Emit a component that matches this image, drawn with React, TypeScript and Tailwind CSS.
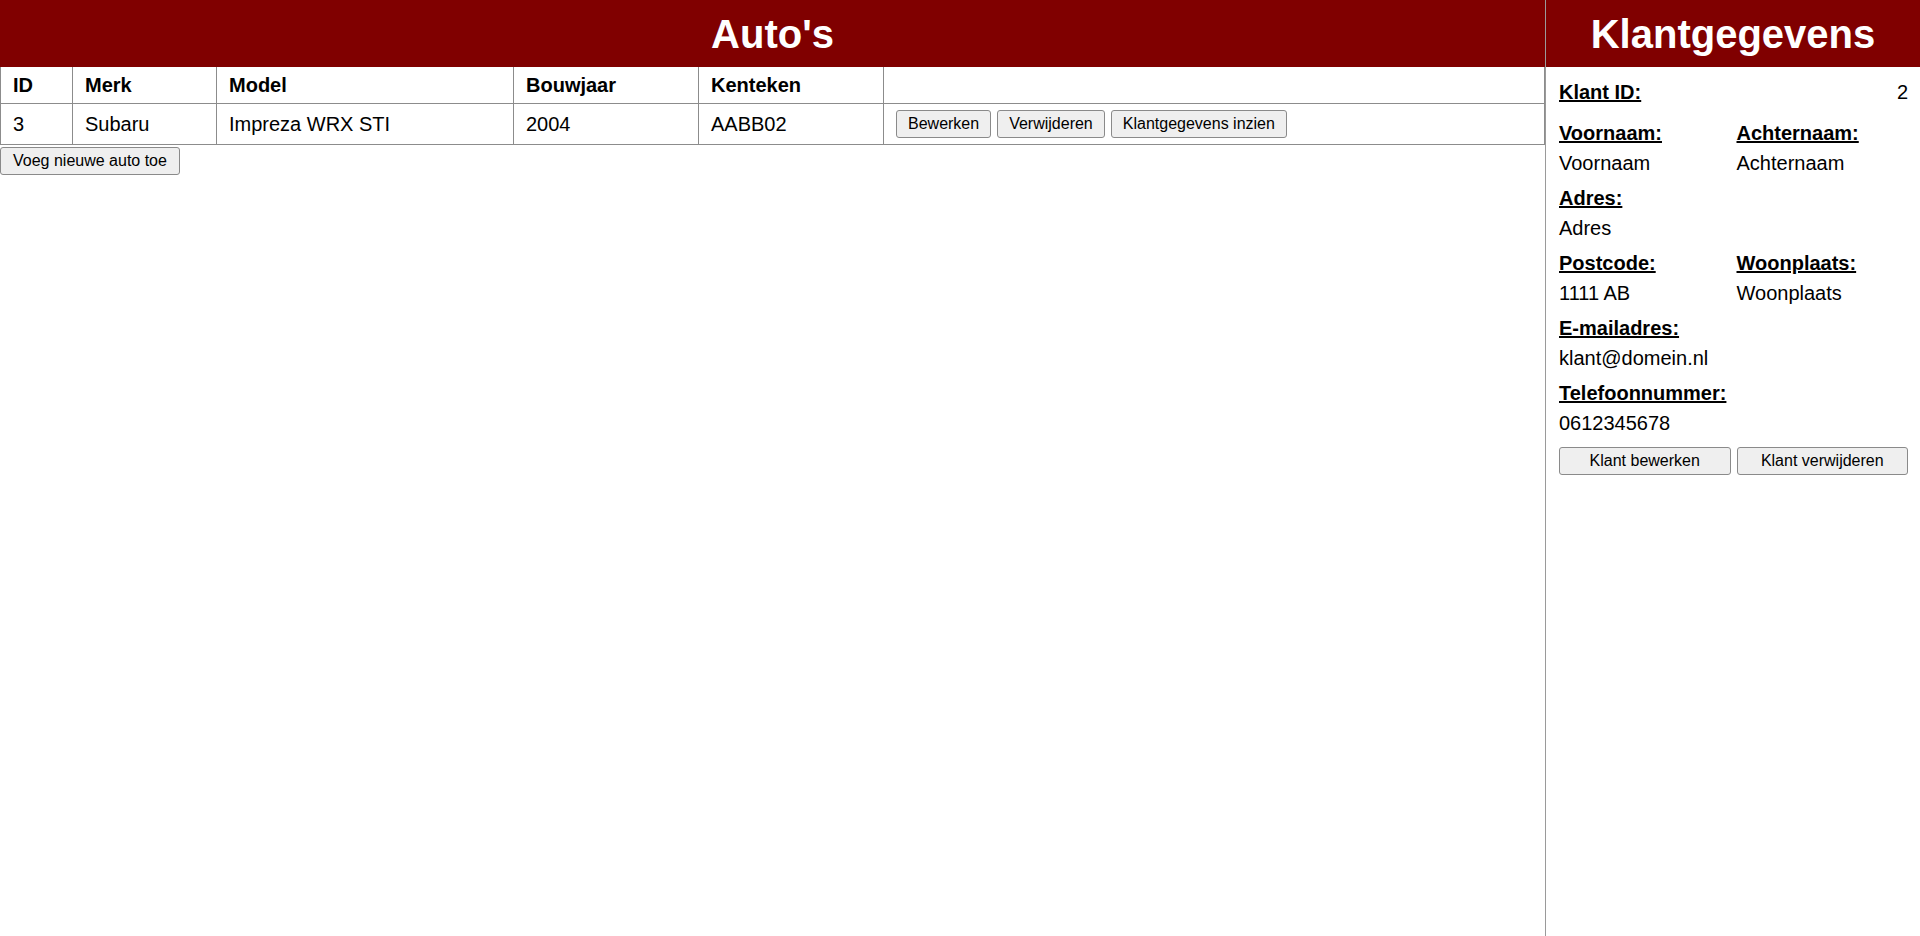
import React from 'react';

const cars = [
  { id: 3, merk: 'Subaru', model: 'Impreza WRX STI', bouwjaar: 2004, kenteken: 'AABB02' },
];

const btn =
  'bg-[#efefef] border border-[#8a8a8a] rounded-[3px] text-[16px] text-black hover:bg-[#e5e5e5]';

const Field = ({ label, value }: { label: string; value: string }) => (
  <div className="mb-3">
    <div className="font-bold underline leading-[23px]">{label}</div>
    <div className="mt-[7px] leading-[23px]">{value}</div>
  </div>
);

const App = () => {
  return (
    <div className="flex min-h-screen bg-white text-black text-[20px] font-['Liberation_Sans',Arial,sans-serif]">
      {/* Auto's */}
      <div className="flex-1 min-w-0">
        <h1 className="h-[67px] flex items-center justify-center bg-[#800000] text-white text-[40px] font-bold">
          Auto's
        </h1>
        <table className="w-full table-fixed border-collapse border-x border-b border-[#8c8c8c]">
          <thead>
            <tr className="text-left">
              <th className="w-[72px] border border-t-0 border-[#8c8c8c] px-3 py-[6px] leading-[24px] font-bold">ID</th>
              <th className="w-[144px] border border-t-0 border-[#8c8c8c] px-3 py-[6px] leading-[24px] font-bold">Merk</th>
              <th className="w-[297px] border border-t-0 border-[#8c8c8c] px-3 py-[6px] leading-[24px] font-bold">Model</th>
              <th className="w-[185px] border border-t-0 border-[#8c8c8c] px-3 py-[6px] leading-[24px] font-bold">Bouwjaar</th>
              <th className="w-[185px] border border-t-0 border-[#8c8c8c] px-3 py-[6px] leading-[24px] font-bold">Kenteken</th>
              <th className="border border-t-0 border-r-0 border-[#8c8c8c]"></th>
            </tr>
          </thead>
          <tbody>
            {cars.map((car) => (
              <tr key={car.id}>
                <td className="border border-[#8c8c8c] px-3 py-[6px] leading-[23px]">{car.id}</td>
                <td className="border border-[#8c8c8c] px-3 py-[6px] leading-[23px]">{car.merk}</td>
                <td className="border border-[#8c8c8c] px-3 py-[6px] leading-[23px]">{car.model}</td>
                <td className="border border-[#8c8c8c] px-3 py-[6px] leading-[23px]">{car.bouwjaar}</td>
                <td className="border border-[#8c8c8c] px-3 py-[6px] leading-[23px]">{car.kenteken}</td>
                <td className="border border-r-0 border-[#8c8c8c] px-3 py-[6px]">
                  <div className="flex gap-[6px]">
                    <button className={`${btn} px-[11px] py-[3px] leading-[20px]`}>Bewerken</button>
                    <button className={`${btn} px-[11px] py-[3px] leading-[20px]`}>Verwijderen</button>
                    <button className={`${btn} px-[11px] py-[3px] leading-[20px]`}>Klantgegevens inzien</button>
                  </div>
                </td>
              </tr>
            ))}
          </tbody>
        </table>
        <button className={`${btn} block mt-[2px] px-[12px] py-[3px] leading-[20px]`}>Voeg nieuwe auto toe</button>
      </div>

      {/* Klantgegevens */}
      <div className="w-[375px] shrink-0 border-l border-[#9a9a9a]">
        <h1 className="h-[67px] flex items-center justify-center bg-[#800000] text-white text-[40px] font-bold">
          Klantgegevens
        </h1>
        <div className="pl-[13px] pr-[12px] pt-[14px]">
          <div className="flex justify-between leading-[23px] mb-[18px]">
            <span className="font-bold underline">Klant ID:</span>
            <span>2</span>
          </div>
          <div className="grid grid-cols-2 gap-x-[6px]">
            <Field label="Voornaam:" value="Voornaam" />
            <Field label="Achternaam:" value="Achternaam" />
          </div>
          <Field label="Adres:" value="Adres" />
          <div className="grid grid-cols-2 gap-x-[6px]">
            <Field label="Postcode:" value="1111 AB" />
            <Field label="Woonplaats:" value="Woonplaats" />
          </div>
          <Field label="E-mailadres:" value="klant@domein.nl" />
          <Field label="Telefoonnummer:" value="0612345678" />
          <div className="grid grid-cols-2 gap-x-[6px]">
            <button className={`${btn} py-[4px] leading-[18px]`}>Klant bewerken</button>
            <button className={`${btn} py-[4px] leading-[18px]`}>Klant verwijderen</button>
          </div>
        </div>
      </div>
    </div>
  );
};

export default App;
